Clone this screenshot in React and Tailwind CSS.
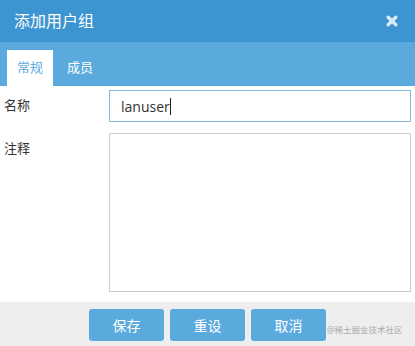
const CloseIcon = () => (
  <svg width="12" height="12" viewBox="0 0 12 12" className="text-[#dcebf7]">
    <path d="M2.2 2.2 L9.8 9.8 M9.8 2.2 L2.2 9.8" stroke="currentColor" strokeWidth="3.4" strokeLinecap="round" />
  </svg>
);

const App = () => {
  return (
    <div className="relative w-[415px] h-[346px] overflow-hidden bg-white font-['Open_Sans','Noto_Sans_CJK_SC',sans-serif]">
      {/* header */}
      <div className="h-[42px] bg-[#3c94d0] flex items-center justify-between pl-[14px] pr-[17px]">
        <span className="text-[16px] text-white leading-none">添加用户组</span>
        <CloseIcon />
      </div>

      {/* tabs */}
      <div className="h-[44px] bg-[#5aaade] flex items-end gap-[4px] pl-[7px]">
        <div className="w-[46px] h-[36px] bg-white flex items-center justify-center text-[13px] text-[#5aaade]">
          常规
        </div>
        <div className="w-[46px] h-[36px] flex items-center justify-center text-[13px] text-white">
          成员
        </div>
      </div>

      {/* form */}
      <div className="pt-[4px] px-[4px] flex flex-col gap-[11px]">
        <div className="flex items-center">
          <label className="w-[105px] text-[13px] text-[#333]">名称</label>
          <div className="flex-1 h-[32px] border border-[#86b9dd] flex items-center pl-[11px] text-[14px] text-[#333]">
            lanuser<span className="w-px h-[17px] bg-[#222]" />
          </div>
        </div>
        <div className="flex items-start">
          <label className="w-[105px] text-[13px] text-[#333] pt-[6px]">注释</label>
          <div className="flex-1 h-[159px] border border-[#cccccc]" />
        </div>
      </div>

      {/* footer */}
      <div className="absolute left-0 right-0 top-[302px] h-[44px] bg-[#eeeeee] flex justify-center gap-[6px] pt-[7px]">
        {["保存", "重设", "取消"].map((t) => (
          <button
            key={t}
            className="w-[75px] h-[32px] rounded-[3px] bg-[#5aaade] text-white text-[14px]"
          >
            {t}
          </button>
        ))}
      </div>

      <div className="absolute left-[327px] top-[326px] whitespace-nowrap text-[8.5px] text-[#aaaaaa] leading-none">
        @稀土掘金技术社区
      </div>
    </div>
  );
};

export default App;
